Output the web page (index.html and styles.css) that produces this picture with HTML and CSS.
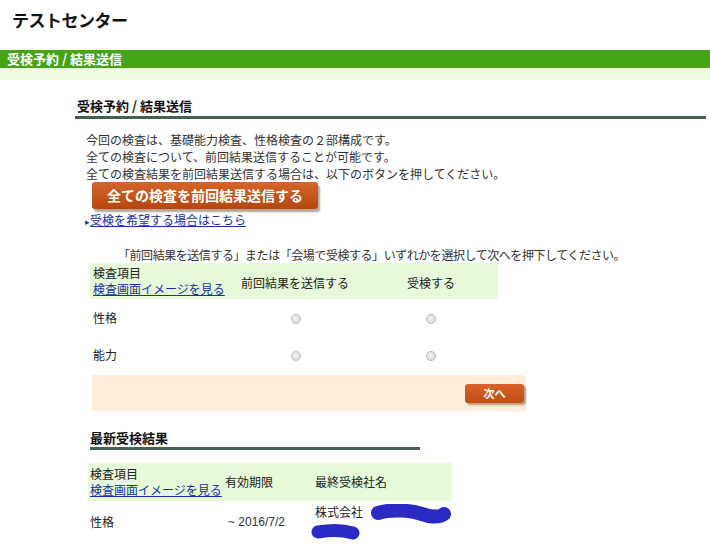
FILE: index.html
```html
<!DOCTYPE html>
<html lang="ja">
<head>
<meta charset="utf-8">
<title>テストセンター</title>
<link rel="stylesheet" href="styles.css">
</head>
<body>
<header class="site-header">
  <h1 class="site-title">テストセンター</h1>
</header>
<div class="page-bar">受検予約 / 結果送信</div>
<div class="page-strip"></div>

<main class="main">
  <h2 class="section-title">受検予約 / 結果送信</h2>
  <div class="intro">
    <p>今回の検査は、基礎能力検査、性格検査の２部構成です。</p>
    <p>全ての検査について、前回結果送信することが可能です。</p>
    <p>全ての検査結果を前回結果送信する場合は、以下のボタンを押してください。</p>
  </div>
  <div class="big-btn-wrap"><button class="big-btn" type="button">全ての検査を前回結果送信する</button></div>
  <div class="hope-link"><span class="tri">&#9656;</span><a href="#">受検を希望する場合はこちら</a></div>

  <p class="instruction">「前回結果を送信する」または「会場で受検する」いずれかを選択して次へを押下してください。</p>

  <table class="choice-table">
    <tr class="head">
      <td class="c1">検査項目<br><a href="#">検査画面イメージを見る</a></td>
      <td class="c2">前回結果を送信する</td>
      <td class="c3">受検する</td>
    </tr>
    <tr class="row">
      <td class="c1">性格</td>
      <td class="c2"><span class="radio r2"></span></td>
      <td class="c3"><span class="radio r3"></span></td>
    </tr>
    <tr class="row">
      <td class="c1">能力</td>
      <td class="c2"><span class="radio r2"></span></td>
      <td class="c3"><span class="radio r3"></span></td>
    </tr>
  </table>
  <div class="next-bar"><button class="next-btn" type="button">次へ</button></div>

  <h2 class="section-title2">最新受検結果</h2>
  <table class="result-table">
    <tr class="head">
      <td class="d1">検査項目<br><a href="#">検査画面イメージを見る</a></td>
      <td class="d2">有効期限</td>
      <td class="d3">最終受検社名</td>
    </tr>
    <tr class="row">
      <td class="d1">性格</td>
      <td class="d2">~ 2016/7/2</td>
      <td class="d3"><div class="company"><span class="co-name">株式会社</span><svg class="scrib1" width="82" height="20" viewBox="0 0 82 20"><path d="M8 9 C20 5, 40 6, 52 10 S70 13, 74 10" stroke="#2b2bc4" stroke-width="14" fill="none" stroke-linecap="round"/></svg></div><svg class="scrib2" width="50" height="20" viewBox="0 0 50 20"><path d="M7 10 C18 8, 32 8, 42 11" stroke="#2b2bc4" stroke-width="13" fill="none" stroke-linecap="round"/></svg></td>
    </tr>
  </table>
</main>
</body>
</html>
```

FILE: styles.css
```css
* { box-sizing: border-box; }
body {
  margin: 0;
  background: #fff;
  color: #222;
  font-family: "Noto Sans CJK JP", "Noto Sans", sans-serif;
  font-size: 12px;
}
.site-header { height: 50px; padding: 8px 0 0 12px; }
.site-title {
  margin: 0;
  font-size: 17px;
  line-height: 24px;
  font-weight: bold;
  color: #111;
  letter-spacing: -0.5px;
}
.page-bar {
  height: 18px;
  background: #45a513;
  color: #fff;
  font-weight: bold;
  font-size: 13px;
  line-height: 18px;
  padding-left: 7px;
}
.page-strip { height: 12px; background: #eefbe2; }

.main { padding: 0 4px 0 75px; }
.section-title {
  margin: 17px 0 0 0;
  font-size: 13px;
  font-weight: bold;
  line-height: 18px;
  padding: 0 0 1px 2px;
  border-bottom: 3px solid #44604e;
  color: #111;
}
.intro { margin: 12px 0 0 11px; }
.intro p { margin: 0; line-height: 17px; color: #333; }
.big-btn-wrap { margin: 0 0 0 17px; }
.big-btn {
  display: block;
  width: 226px;
  height: 27px;
  border: 0;
  border-radius: 3px;
  background: linear-gradient(#d5652a, #b4470f);
  color: #fff;
  font-family: inherit;
  font-size: 14px;
  font-weight: bold;
  line-height: 27px;
  box-shadow: 2px 3px 2px rgba(120, 90, 60, 0.55);
  padding: 0;
}
.hope-link { margin: 3px 0 0 10px; line-height: 16px; }
.hope-link .tri { color: #1a3a9a; font-size: 9px; }
a { color: #1b2fa0; text-decoration: underline; }

.instruction { margin: 16px 0 0 43px; line-height: 17px; color: #333; letter-spacing: -0.45px; }

table { border-collapse: collapse; }
td { padding: 0; vertical-align: middle; }
.choice-table { margin: 0 0 0 15px; width: 408px; }
.choice-table .head { background: #e6f9d9; height: 36px; }
.choice-table .row { height: 37px; }
.choice-table .c1 { width: 150px; padding-left: 3px; line-height: 16px; }
.choice-table .c2 { width: 160px; padding-left: 1px; line-height: 16px; }
.choice-table .c3 { width: 98px; padding-left: 7px; line-height: 16px; }
.choice-table .head .c2, .choice-table .head .c3 { padding-top: 3px; }
.radio {
  display: inline-block;
  width: 10px;
  height: 10px;
  border-radius: 50%;
  border: 1px solid #b9b9b9;
  background: radial-gradient(circle at 40% 40%, #f2f2f2, #d6d6d6);
  vertical-align: middle;
}
.r2 { margin-left: 50px; }
.r3 { margin-left: 19px; }

.next-bar {
  margin: 2px 0 0 17px;
  width: 434px;
  height: 36px;
  background: #fdecd9;
  display: flex;
  justify-content: flex-end;
  align-items: center;
  padding-right: 2px;
}
.next-btn {
  width: 59px;
  height: 19px;
  border: 0;
  border-radius: 3px;
  background: linear-gradient(#d8612a, #c04e15);
  color: #fff;
  font-family: inherit;
  font-size: 11px;
  font-weight: bold;
  line-height: 19px;
  padding: 0;
  box-shadow: 2px 2px 2px rgba(120, 90, 60, 0.55);
  margin-top: 1px;
}

.section-title2 {
  margin: 18px 0 0 15px;
  width: 330px;
  font-size: 13px;
  font-weight: bold;
  line-height: 18px;
  padding-bottom: 0;
  border-bottom: 3px solid #44604e;
  color: #111;
}
.result-table { margin: 13px 0 0 13px; width: 364px; }
.result-table .head { background: #e6f9d9; height: 38px; }
.result-table .row { height: 40px; }
.result-table td { line-height: 16px; }
.result-table .d1 { width: 137px; padding-left: 2px; }
.result-table .d2 { width: 90px; }
.result-table .row .d2 { padding-left: 3px; font-family: "Liberation Sans", sans-serif; color: #333; }
.result-table .d3 { width: 137px; }
.result-table .row .d3 { vertical-align: top; padding-top: 3px; }
.company { display: flex; align-items: flex-start; }
.co-name { white-space: nowrap; }
.scrib1 { margin: 0 0 0 7px; display: block; flex: none; }
.scrib2 { display: block; margin: -2px 0 0 -4px; }
```
